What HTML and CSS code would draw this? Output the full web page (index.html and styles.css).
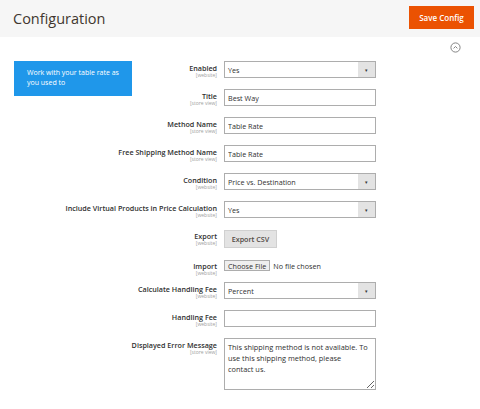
FILE: index.html
```html
<!DOCTYPE html>
<html lang="en">
<head>
  <meta charset="UTF-8" />
  <meta name="viewport" content="width=device-width, initial-scale=1" />
  <title>Configuration</title>
  <link rel="stylesheet" href="styles.css">
</head>
<body>
  <header class="page-header">
    <h1 class="page-title">Configuration</h1>
    <button class="save-btn" type="button">Save Config</button>
  </header>

  <div class="section-toggle">
    <svg width="11" height="11" viewBox="0 0 11 11" aria-hidden="true">
      <circle cx="5.5" cy="5.5" r="4.6" fill="none" stroke="#777" stroke-width="0.9"/>
      <path d="M3.6 6.4 L5.5 4.5 L7.4 6.4" fill="none" stroke="#777" stroke-width="0.9"/>
    </svg>
  </div>

  <form class="fields">
    <div class="note">Work with your table rate as you used to</div>

    <div class="label label-short">Enabled<span class="scope">[website]</span></div>
    <div class="control">
      <div class="select"><span>Yes</span><i class="arrow">&#9662;</i></div>
    </div>

    <div class="label label-short">Title<span class="scope">[store view]</span></div>
    <div class="control"><input class="text" type="text" value="Best Way"></div>

    <div class="label">Method Name<span class="scope">[store view]</span></div>
    <div class="control"><input class="text" type="text" value="Table Rate"></div>

    <div class="label">Free Shipping Method Name<span class="scope">[store view]</span></div>
    <div class="control"><input class="text" type="text" value="Table Rate"></div>

    <div class="label">Condition<span class="scope">[website]</span></div>
    <div class="control">
      <div class="select"><span>Price vs. Destination</span><i class="arrow">&#9662;</i></div>
    </div>

    <div class="label">Include Virtual Products in Price Calculation<span class="scope">[website]</span></div>
    <div class="control">
      <div class="select"><span>Yes</span><i class="arrow">&#9662;</i></div>
    </div>

    <div class="label">Export<span class="scope">[website]</span></div>
    <div class="control"><button class="export-btn" type="button">Export CSV</button></div>

    <div class="label compact">Import<span class="scope">[website]</span></div>
    <div class="control compact"><input class="file" type="file"></div>

    <div class="label">Calculate Handling Fee<span class="scope">[website]</span></div>
    <div class="control">
      <div class="select"><span>Percent</span><i class="arrow">&#9662;</i></div>
    </div>

    <div class="label">Handling Fee<span class="scope">[website]</span></div>
    <div class="control"><input class="text" type="text" value=""></div>

    <div class="label">Displayed Error Message<span class="scope">[store view]</span></div>
    <div class="control"><textarea class="area">This shipping method is not available. To use this shipping method, please
contact us.</textarea></div>
  </form>
</body>
</html>
```

FILE: styles.css
```css
html, body {
  margin: 0;
  background: #fff;
  font-family: "Open Sans", Arial, sans-serif;
  color: #303030;
}

.page-header {
  display: flex;
  justify-content: space-between;
  align-items: center;
  height: 37px;
  padding: 0 6px 0 13px;
  background: #f6f6f6;
}

.page-title {
  margin: 0;
  font-size: 14.5px;
  font-weight: 400;
  color: #41362f;
}

.save-btn {
  width: 65px;
  height: 23px;
  margin-top: -2px;
  padding: 0;
  border: 0;
  background: #eb5202;
  color: #fff;
  font-family: inherit;
  font-size: 8px;
  font-weight: 600;
}

.section-toggle {
  display: flex;
  justify-content: flex-end;
  padding: 5px 19px 0 0;
  height: 15px;
}

.fields {
  display: grid;
  grid-template-columns: 118px 92px 152px;
  row-gap: 11px;
  padding: 4px 0 0 14px;
}

.note {
  grid-column: 1;
  grid-row: 1 / span 2;
  align-self: start;
  height: 35px;
  box-sizing: border-box;
  padding: 7px 4px 0 13px;
  background: #1f97ea;
  color: #fff;
  font-size: 7px;
  line-height: 10px;
}

.label {
  grid-column: 1 / 3;
  padding: 3px 7px 0 0;
  text-align: right;
  font-size: 7.2px;
  font-weight: 600;
  line-height: 9px;
}

.label-short {
  grid-column: 2;
}

.compact {
  margin-bottom: -5px;
}

.scope {
  display: block;
  font-size: 5px;
  font-weight: 400;
  line-height: 5px;
  color: #a0a0a0;
}

.control {
  grid-column: 3;
}

.text,
.select,
.area {
  display: block;
  width: 152px;
  height: 17px;
  box-sizing: border-box;
  margin: 0;
  border: 1px solid #adadad;
  background: #fff;
  font-family: inherit;
  font-size: 7.2px;
  color: #303030;
}

.text {
  padding: 0 3px;
}

.select {
  display: flex;
  align-items: center;
  padding-left: 3px;
}

.select span {
  flex: 1;
}

.arrow {
  display: flex;
  align-items: center;
  justify-content: center;
  width: 17px;
  height: 100%;
  background: #e3e3e3;
  font-style: normal;
  font-size: 5px;
  color: #333;
}

.export-btn {
  display: block;
  width: 53px;
  height: 18px;
  margin-top: 1px;
  padding: 0;
  border: 1px solid #d0d0d0;
  background: #e3e3e3;
  font-family: inherit;
  font-size: 7.2px;
  font-weight: 600;
  color: #514943;
}

.file {
  display: block;
  margin-top: 1px;
  font-family: inherit;
  font-size: 7.2px;
  color: #303030;
}

.file::file-selector-button {
  height: 11px;
  margin-right: 3px;
  padding: 0 3px;
  border: 1px solid #adadad;
  background: #efefef;
  font-family: inherit;
  font-size: 7.2px;
  color: #303030;
}

.area {
  height: 52px;
  padding: 3px 4px 3px 3px;
  font-size: 7.4px;
  line-height: 11px;
  resize: vertical;
}
```
